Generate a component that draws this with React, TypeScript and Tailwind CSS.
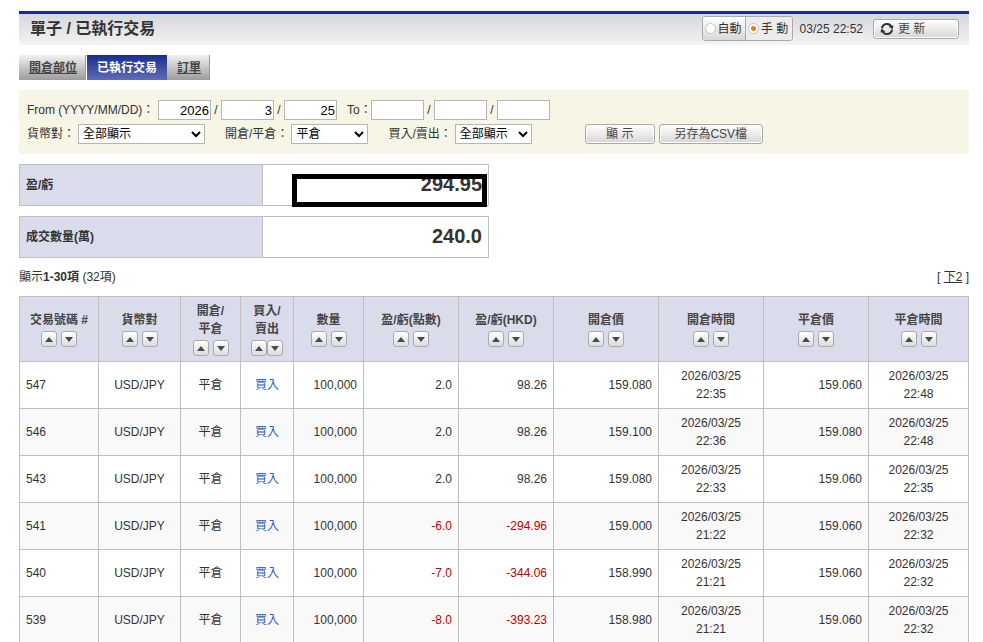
/**
 * Executed trades
 * Filter bar, totals and the list of executed orders.
 */

import { useState } from "react";

// ---------------------------------------------------------------------------
// Types and data
// ---------------------------------------------------------------------------

interface Trade {
  id: number;
  openPrice: string;
  openTime: string;
  closePrice: string;
  closeTime: string;
  pips: string;
  hkd: string;
}

const DAY = "2026/03/25";

const TRADES: Trade[] = [
  { id: 547, pips: "2.0",  hkd: "98.26",   openPrice: "159.080", openTime: "22:35", closePrice: "159.060", closeTime: "22:48" },
  { id: 546, pips: "2.0",  hkd: "98.26",   openPrice: "159.100", openTime: "22:36", closePrice: "159.080", closeTime: "22:48" },
  { id: 543, pips: "2.0",  hkd: "98.26",   openPrice: "159.080", openTime: "22:33", closePrice: "159.060", closeTime: "22:35" },
  { id: 541, pips: "-6.0", hkd: "-294.96", openPrice: "159.000", openTime: "21:22", closePrice: "159.060", closeTime: "22:32" },
  { id: 540, pips: "-7.0", hkd: "-344.06", openPrice: "158.990", openTime: "21:21", closePrice: "159.060", closeTime: "22:32" },
  { id: 539, pips: "-8.0", hkd: "-393.23", openPrice: "158.980", openTime: "21:21", closePrice: "159.060", closeTime: "22:32" },
];

const COLUMNS: { lines: string[]; width: string; tight?: boolean }[] = [
  { lines: ["交易號碼 #"],    width: "w-[79px]" },
  { lines: ["貨幣對"],        width: "w-[82px]" },
  { lines: ["開倉/", "平倉"], width: "w-[60px]" },
  { lines: ["買入/", "賣出"], width: "w-[53px]", tight: true },
  { lines: ["數量"],          width: "w-[70px]" },
  { lines: ["盈/虧(點數)"],   width: "w-[95px]" },
  { lines: ["盈/虧(HKD)"],    width: "w-[95px]" },
  { lines: ["開倉價"],        width: "w-[105px]" },
  { lines: ["開倉時間"],      width: "w-[105px]" },
  { lines: ["平倉價"],        width: "w-[105px]" },
  { lines: ["平倉時間"],      width: "w-[100px]" },
];

// ---------------------------------------------------------------------------
// Small controls
// ---------------------------------------------------------------------------

const BUTTON =
  "h-5 rounded-[3px] border border-[#aaa] bg-linear-to-b from-white to-[#d6d6d6] text-xs leading-none text-[#444] shadow-[inset_0_0_0_1px_#fff]";

function SortButton({ dir, label }: { dir: "up" | "down"; label: string }) {
  return (
    <button
      type="button"
      aria-label={`${label} ${dir}`}
      className="flex size-4 items-center justify-center rounded-[3px] border border-[#aaa] bg-linear-to-b from-white to-[#dcdcdc]"
    >
      <svg width="8" height="5" viewBox="0 0 8 5" fill="#4a4a4a">
        <path d={dir === "up" ? "M4 0L8 5H0z" : "M0 0H8L4 5z"} />
      </svg>
    </button>
  );
}

function RadioOption({ label, checked, onSelect }: { label: string; checked: boolean; onSelect: () => void }) {
  return (
    <label
      className={`flex flex-auto items-center gap-0.5 px-0.5 ${
        checked ? "bg-[#ececec]" : "bg-linear-to-b from-white to-[#d8d8d8]"
      }`}
    >
      <input
        type="radio"
        name="refresh-mode"
        checked={checked}
        onChange={onSelect}
        className="size-[11px] appearance-none rounded-full border border-[#c4c4c4] bg-white checked:bg-[radial-gradient(circle,#e87a10_0,#e87a10_2px,#fff_3px)]"
      />
      <span className="whitespace-pre">{label}</span>
    </label>
  );
}

function DateInput({ label, value }: { label: string; value?: string }) {
  return (
    <input
      type="text"
      aria-label={label}
      defaultValue={value}
      className="h-5 w-[53px] border border-[#b5b5b5] bg-white px-px text-right text-[13px] text-black"
    />
  );
}

function DateGroup({ name, values }: { name: string; values: string[] }) {
  return (
    <div className="flex items-center">
      <DateInput label={`${name} year`} value={values[0]} />
      <span className="w-2.5 text-center">/</span>
      <DateInput label={`${name} month`} value={values[1]} />
      <span className="w-2.5 text-center">/</span>
      <DateInput label={`${name} day`} value={values[2]} />
    </div>
  );
}

function FilterSelect({ id, label, options, width }: { id: string; label: string; options: string[]; width: string }) {
  return (
    <div className="flex items-center gap-[3px]">
      <label htmlFor={id}>{label}：</label>
      <select id={id} className={`h-5 border border-[#b5b5b5] bg-white text-xs text-black ${width}`}>
        {options.map((o) => (
          <option key={o}>{o}</option>
        ))}
      </select>
    </div>
  );
}

function RefreshIcon() {
  return (
    <svg width="14" height="14" viewBox="0 0 14 14" fill="none" stroke="#333" strokeWidth="2">
      <path d="M2 6.4A5 5 0 0 1 11.4 4.6" />
      <path d="M12 7.6A5 5 0 0 1 2.6 9.4" />
      <path d="M8.4 4.6L13.6 3.4L12.6 7.2z" fill="#333" stroke="none" />
      <path d="M5.6 9.4L0.4 10.6L1.4 6.8z" fill="#333" stroke="none" />
    </svg>
  );
}

// ---------------------------------------------------------------------------
// Totals
// ---------------------------------------------------------------------------

function Total({ label, value, masked }: { label: string; value: string; masked?: boolean }) {
  return (
    <div className="relative flex h-[42px] w-[470px] max-w-full border border-[#bfbfbf]">
      <div className="flex w-[243px] items-center border-r border-[#bfbfbf] bg-[#dbdceb] px-1.5 font-bold">{label}</div>
      <div className="flex flex-1 items-center justify-end px-1.5 pb-0.5 text-xl leading-6 font-bold">{value}</div>
      {masked && <div className="absolute top-[9px] right-px h-[33px] w-[195px] border-[5px] border-black" />}
    </div>
  );
}

// ---------------------------------------------------------------------------
// Table
// ---------------------------------------------------------------------------

function Stamp({ time }: { time: string }) {
  return (
    <>
      {DAY}
      <br />
      {time}
    </>
  );
}

function TradeTable() {
  const cell = "border border-[#bfbfbf] px-1.5 py-[5px]";

  return (
    <table className="w-full table-fixed border-collapse">
      <thead>
        <tr className="h-[65px] bg-[#dbdceb]">
          {COLUMNS.map((c) => (
            <th key={c.lines.join("")} className={`border border-[#bfbfbf] p-0 text-[#444] ${c.width}`}>
              {c.lines.map((line) => (
                <div key={line}>{line}</div>
              ))}
              <div className={`flex justify-center pt-0.5 ${c.tight ? "" : "gap-1"}`}>
                <SortButton dir="up" label={c.lines.join("")} />
                <SortButton dir="down" label={c.lines.join("")} />
              </div>
            </th>
          ))}
        </tr>
      </thead>
      <tbody>
        {TRADES.map((t) => {
          const sign = t.pips.startsWith("-") ? "text-[#c00000]" : "";
          return (
            <tr key={t.id} className="h-[47px] even:bg-[#f9f9f9]">
              <td className={cell}>{t.id}</td>
              <td className={`${cell} text-center`}>USD/JPY</td>
              <td className={`${cell} text-center`}>平倉</td>
              <td className={`${cell} text-center text-[#2a5bc4]`}>買入</td>
              <td className={`${cell} text-right`}>100,000</td>
              <td className={`${cell} text-right ${sign}`}>{t.pips}</td>
              <td className={`${cell} text-right ${sign}`}>{t.hkd}</td>
              <td className={`${cell} text-right`}>{t.openPrice}</td>
              <td className={`${cell} text-center`}><Stamp time={t.openTime} /></td>
              <td className={`${cell} text-right`}>{t.closePrice}</td>
              <td className={`${cell} text-center`}><Stamp time={t.closeTime} /></td>
            </tr>
          );
        })}
      </tbody>
    </table>
  );
}

// ---------------------------------------------------------------------------
// Page
// ---------------------------------------------------------------------------

export default function App() {
  const [mode, setMode] = useState<"auto" | "manual">("manual");
  const idleTab =
    "flex items-center border-r border-[#999] bg-linear-to-b from-[#f2f2f2] to-[#9c9c9c] pr-2 pl-2.5 text-[#444] underline";

  return (
    <div className="min-h-screen bg-white pt-[11px] pr-3.5 pl-[19px] font-['Liberation_Sans','Noto_Sans_CJK_TC',sans-serif] text-xs leading-[18px] text-[#333]">
      <header className="flex h-[34px] items-center justify-between border-t-[3px] border-[#1a2c8f] bg-linear-to-b from-[#d6d7dc] to-[#f3f3f4] pr-2.5 pb-0.5 pl-[11px]">
        <h1 className="text-base font-bold">單子 / 已執行交易</h1>
        <div className="flex items-center">
          <div className="flex h-[25px] w-[91px] divide-x divide-[#aaa] overflow-hidden rounded-[3px] border border-[#aaa]">
            <RadioOption label="自動" checked={mode === "auto"} onSelect={() => setMode("auto")} />
            <RadioOption label="手 動" checked={mode === "manual"} onSelect={() => setMode("manual")} />
          </div>
          <span className="pr-2.5 pl-[7px]">03/25 22:52</span>
          <button type="button" className={`${BUTTON} flex w-[86px] items-center gap-1 pl-1.5`}>
            <RefreshIcon />
            <span>更 新</span>
          </button>
        </div>
      </header>

      <nav className="mt-2.5 flex h-[25px] font-bold">
        <a href="#positions" className={`${idleTab} mr-px`}>開倉部位</a>
        <a href="#executed" className="flex items-center bg-linear-to-b from-[#1a2c8f] to-[#626bb3] px-2.5 text-white">已執行交易</a>
        <a href="#orders" className={idleTab}>訂單</a>
      </nav>

      <form className="mt-2.5 flex flex-col gap-1 bg-[#f7f5e6] px-2 py-2.5">
        <div className="flex items-center">
          <span className="w-[131px] whitespace-nowrap">From (YYYY/MM/DD)：</span>
          <DateGroup name="From" values={["2026", "3", "25"]} />
          <span className="w-[34px] pl-2.5 whitespace-nowrap">To：</span>
          <DateGroup name="To" values={["", "", ""]} />
        </div>
        <div className="flex items-center">
          <div className="flex gap-5">
            <FilterSelect id="pair" label="貨幣對" options={["全部顯示", "USD/JPY"]} width="w-[127px]" />
            <FilterSelect id="kind" label="開倉/平倉" options={["平倉", "開倉"]} width="w-[77px]" />
            <FilterSelect id="side" label="買入/賣出" options={["全部顯示", "買入", "賣出"]} width="w-[77px]" />
          </div>
          <button type="button" className={`${BUTTON} ml-[53px] w-[70px]`}>顯 示</button>
          <button type="button" className={`${BUTTON} ml-1 w-[104px]`}>另存為CSV檔</button>
        </div>
      </form>

      <section className="mt-2.5 flex flex-col gap-2.5">
        <Total label="盈/虧" value="294.95" masked />
        <Total label="成交數量(萬)" value="240.0" />
      </section>

      <div className="my-2.5 flex justify-between">
        <p>顯示<b>1-30項</b> (32項)</p>
        <p>[ <a href="#page-2" className="underline">下2</a> ]</p>
      </div>

      <TradeTable />
    </div>
  );
}
